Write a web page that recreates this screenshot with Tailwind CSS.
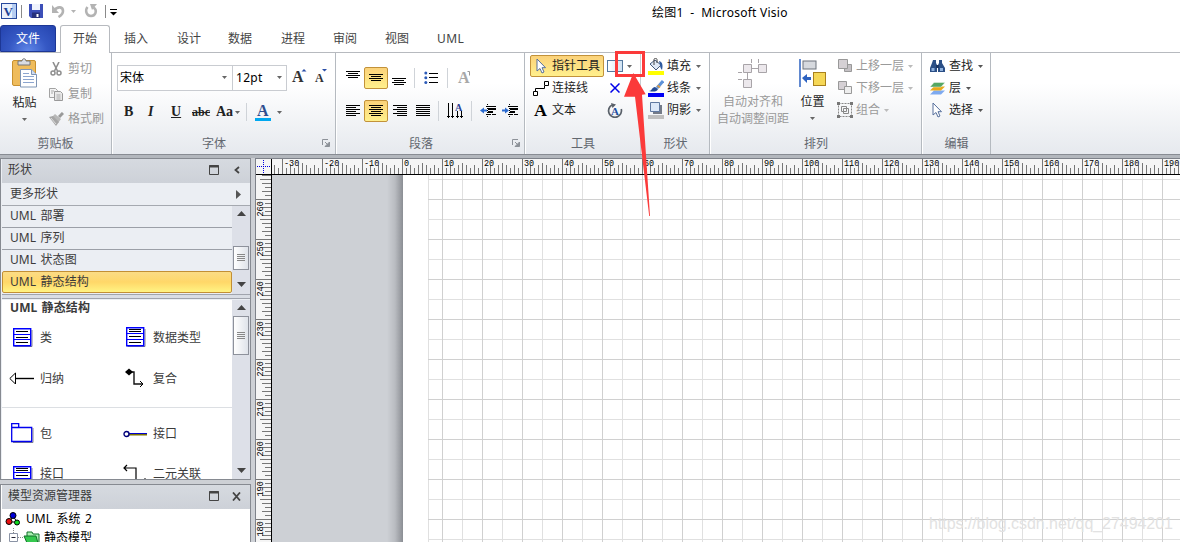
<!DOCTYPE html>
<html lang="zh">
<head>
<meta charset="utf-8">
<title>绘图1 - Microsoft Visio</title>
<script src="https://cdn.jsdelivr.net/npm/@tailwindcss/browser@4"></script>
</head>
<body class="w-[1180px] h-[542px] overflow-hidden relative bg-white text-[12px] leading-[16px] text-[#1e1e1e] font-['Noto_Sans','Noto_Sans_CJK_SC',sans-serif] whitespace-nowrap">
<svg class="hidden">
  <symbol id="caret" viewBox="0 0 5 3"><path d="M0 0h5L2.5 3z" fill="currentColor"/></symbol>
  <symbol id="launch" viewBox="0 0 8 8"><path d="M.5 6V.5H6" fill="none" stroke="#8d9299"/><path d="M3 3l3 3M7.500 3v4.500H3z" stroke="#8d9299" fill="#8d9299"/></symbol>
  <symbol id="cursor" viewBox="0 0 10 16"><path d="M1 1v12l3-2.500 2 4.500 2-1-2-4.300h3.500z" fill="#fff" stroke="#566f9c"/></symbol>
  <symbol id="cls" viewBox="0 0 20 20"><path d="M1.500 18.500h17.500V2" fill="none" stroke="#888"/><path d="M.7 .7h17v17H.7z" fill="#fff" stroke="#0000ff" stroke-width="1.400"/><path d="M0 6.500h18M0 11.500h18" stroke="#0000ff"/><path d="M3 3.500h12M3 9.500h12M3 14.500h12" stroke="#000"/></symbol>
  <symbol id="dtype" viewBox="0 0 20 20"><path d="M1.500 19.500h17.500V2" fill="none" stroke="#888"/><path d="M.7 .7h17v18H.7z" fill="#fff" stroke="#0000ff" stroke-width="1.400"/><path d="M0 6.500h18M0 12.500h18" stroke="#0000ff"/><path d="M3 2.500h12M3 4.500h12M3 9.500h12M3 15.500h12" stroke="#000"/></symbol>
</svg>

<!-- title bar -->
<header class="h-[25px] flex items-start relative">
  <div class="flex items-center h-[22px] pl-[1px]">
    <svg width="16" height="16" viewBox="0 0 16 16"><rect x=".5" y=".5" width="15" height="15" fill="#e8f0fc" stroke="#26489c"/><path d="M11 1h4v14h-4z" fill="#b6cdf2"/><text x="2.500" y="12.500" font-family="Liberation Serif" font-weight="bold" font-size="13" fill="#1d3f94">V</text></svg>
    <div class="ml-[4px] w-px h-[13px] bg-[#8a8a8a]"></div>
    <svg class="ml-[7px]" width="14" height="14" viewBox="0 0 14 14"><path d="M0 0h14v14H2l-2-2z" fill="#3c4fb8"/><path d="M3 0h8v6H3z" fill="#eef2fc"/><path d="M3 8.500h8V14H3z" fill="#26307c"/><path d="M7.500 10h2v3h-2z" fill="#fff"/></svg>
    <svg class="ml-[9px]" width="13" height="13" viewBox="0 0 13 13"><path d="M2 5.500c4-5 9-3.500 9 .5 0 3-2 4.500-4.500 6" fill="none" stroke="#b3b3b3" stroke-width="2.600"/><path d="M0 0v8h7z" fill="#b3b3b3"/></svg>
    <svg class="ml-[6px] text-[#b3b3b3]" width="5" height="3"><use href="#caret"/></svg>
    <svg class="ml-[8px]" width="14" height="14" viewBox="0 0 14 14"><path d="M3.500 3C1 6 2 12 7 12s6.500-6 2.500-8.500" fill="none" stroke="#b3b3b3" stroke-width="2.500"/><path d="M6 0h7L8 6z" fill="#b3b3b3"/></svg>
    <div class="ml-[7px] w-px h-[13px] bg-[#8a8a8a]"></div>
    <svg class="ml-[4px] mt-[2px]" width="7" height="7" viewBox="0 0 7 7"><path d="M0 .5h7" stroke="#000"/><path d="M0 3h7L3.500 6.500z"/></svg>
  </div>
  <div class="absolute left-[652px] top-[5px] text-black tracking-[0.25px]">绘图1&nbsp; - &nbsp;Microsoft Visio</div>
</header>

<!-- tabs -->
<nav class="h-[28px] flex items-end border-b border-[#b7babf] text-[#444]">
  <div class="w-[56px] h-[27px] rounded-t-[3px] border border-[#1d3795] bg-[radial-gradient(ellipse_at_bottom,#5f86e8_0%,#3558c4_50%,#2443ae_100%)] text-white flex items-center justify-center">文件</div>
  <div class="ml-[4px] w-[50px] h-[28px] -mb-px rounded-t-[3px] border border-b-0 border-[#b7babf] bg-white flex items-center justify-center pb-[2px]">开始</div>
  <div class="flex items-center h-[27px] pl-[14px]">
    <span class="w-[53px]">插入</span><span class="w-[51px]">设计</span><span class="w-[53px]">数据</span><span class="w-[52px]">进程</span><span class="w-[52px]">审阅</span><span class="w-[52px]">视图</span><span class="tracking-[0.4px]">UML</span>
  </div>
</nav>

<!-- ribbon -->
<section class="h-[101px] flex bg-linear-to-b from-white from-30% to-[#e6e9ee]">
  <!-- clipboard -->
  <div class="w-[112px] border-r border-[#b5bac0] flex flex-col">
    <div class="h-[80px] flex">
      <div class="w-[49px] flex flex-col items-center pt-[5px]">
        <svg width="26" height="30" viewBox="0 0 26 30"><rect x=".5" y="2.500" width="23" height="25" rx="1.500" fill="#efbc5c" stroke="#c8912f"/><path d="M6 3h4c0-3 4-3 4 0h4v4H6z" fill="#d9dce2" stroke="#777"/><path d="M8.500 11.500h11l5 5v12.500h-16z" fill="#fff" stroke="#7f95b5"/><path d="M19.500 11.500v5h5" fill="#cfdcf0" stroke="#7f95b5"/><path d="M11 15.500h6M11 18.500h11M11 21.500h11M11 24.500h11" stroke="#8ca5cf"/></svg>
        <div class="mt-[7px]">粘贴</div>
        <svg class="mt-[7px] text-[#666]" width="5" height="3"><use href="#caret"/></svg>
      </div>
      <div class="flex flex-col pt-[3px] text-[#989898]">
        <div class="h-[25px] flex items-center gap-[5px]"><svg width="14" height="14" viewBox="0 0 14 14"><path d="M4 0l4.500 9M10 0L5.500 9" stroke="#8f8f8f" stroke-width="1.600"/><circle cx="4" cy="11" r="2" fill="none" stroke="#8f8f8f" stroke-width="1.500"/><circle cx="10" cy="11" r="2" fill="none" stroke="#8f8f8f" stroke-width="1.500"/></svg>剪切</div>
        <div class="h-[25px] flex items-center gap-[5px]"><svg width="14" height="14" viewBox="0 0 14 14"><path d="M.5 1.500h6l2 2v7h-8z" fill="#f4f4f4" stroke="#a3a3a3"/><path d="M5.500 4.500h6l2 2v7h-8z" fill="#e8e8e8" stroke="#999"/><path d="M2 4h3M2 6h2M7.500 8h4M7.500 10h4M7.500 12h4" stroke="#aaa"/></svg>复制</div>
        <div class="h-[25px] flex items-center gap-[4px]"><svg width="15" height="14" viewBox="0 0 15 14"><path d="M14 1l-4 4" stroke="#999" stroke-width="3"/><path d="M6 2l6 5-3 4-6-6z" fill="#b8b8b8"/><path d="M0 5l4-1 6 6-3 4z" fill="#a6a6a6"/><path d="M2 6l5 6" stroke="#ddd"/></svg>格式刷</div>
      </div>
    </div>
    <div class="text-center text-[#62676f] leading-[21px]">剪贴板</div>
  </div>
  <!-- font -->
  <div class="w-[224px] border-l border-l-white border-r border-[#b5bac0] flex flex-col">
    <div class="h-[38px] flex items-end pl-[4px] text-black">
      <div class="w-[116px] h-[26px] border border-[#c9ccd1] bg-white flex items-center justify-between pl-[2px] pr-[5px] pb-[1px]">宋体<svg class="text-[#666]" width="5" height="3"><use href="#caret"/></svg></div>
      <div class="-ml-px w-[55px] h-[26px] border border-[#c9ccd1] bg-white flex items-center justify-between pl-[3px] pr-[4px] pb-[1px] tracking-[0.3px]">12pt<svg class="text-[#666]" width="5" height="3"><use href="#caret"/></svg></div>
      <svg class="ml-[5px] mb-[6px] overflow-visible" width="36" height="18" viewBox="0 0 36 18"><g font-family="Liberation Serif" font-weight="bold" fill="#333"><text x="0" y="15" font-size="16">A</text><text x="23" y="15" font-size="12">A</text></g><path d="M9.500 4.500h5L12 2zM30 2h5l-2.500 2.500z" fill="#2b4fa8"/></svg>
    </div>
    <div class="h-[42px] flex items-center pl-[11px] font-['Liberation_Serif',serif] text-[14px] font-bold text-[#222]">
      <span class="w-[24px]">B</span><span class="w-[23px] italic">I</span><span class="w-[21px] underline">U</span><span class="w-[24px] line-through text-[12px]">abc</span><span class="w-[19px]">Aa</span>
      <svg class="text-[#666]" width="5" height="3"><use href="#caret"/></svg>
      <div class="ml-[6px] w-px h-[18px] bg-[#cfd3d8]"></div>
      <svg class="ml-[8px] mt-[1px] overflow-visible" width="16" height="17" viewBox="0 0 16 17"><text x="2" y="12" font-size="16" font-weight="bold" font-family="Liberation Serif" fill="#2f4f8f">A</text><path d="M0 14h16v3H0z" fill="#00a8f0"/></svg>
      <svg class="ml-[6px] text-[#666]" width="5" height="3"><use href="#caret"/></svg>
    </div>
    <div class="flex text-[#62676f] leading-[21px]"><span class="w-[202px] text-center">字体</span><svg class="ml-[7px] mt-[6px]" width="8" height="8"><use href="#launch"/></svg></div>
  </div>
  <!-- paragraph -->
  <div class="w-[189px] border-l border-l-white border-r border-[#b5bac0] flex flex-col">
    <div class="mt-[8px] h-[33px] flex items-center pl-[9px]">
      <svg width="14" height="22" stroke="#000"><path d="M0 4.500h14M2 6.500h10M0 8.500h14M2 10.500h10"/></svg>
      <div class="ml-[4px] w-[24px] h-[22px] rounded-[2px] border border-[#c2923a] bg-linear-to-b from-[#fbd27a] to-[#fff08c] flex items-center justify-center"><svg width="14" height="8" stroke="#000"><path d="M0 .5h14M2 2.500h10M0 4.500h14M2 6.500h10"/></svg></div>
      <svg class="ml-[4px]" width="14" height="22" stroke="#000"><path d="M0 11.500h14M2 13.500h10M0 15.500h14M2 17.500h10"/></svg>
      <div class="ml-[8px] w-px h-[20px] bg-[#cfd3d8]"></div>
      <svg class="ml-[9px]" width="14" height="14" viewBox="0 0 14 14"><path d="M5 2.500h9M5 6.500h9M5 11.500h9" stroke="#000"/><g fill="#2c5bb8"><circle cx="1.800" cy="2" r="1.500"/><circle cx="1.800" cy="6.700" r="1.500"/><circle cx="1.800" cy="11.500" r="1.500"/></g></svg>
      <div class="ml-[9px] w-px h-[20px] bg-[#cfd3d8]"></div>
      <svg class="ml-[10px] overflow-visible" width="14" height="16" viewBox="0 0 14 16"><text x="0" y="13" font-size="16" font-weight="bold" font-family="Liberation Serif" fill="#a8a8a8">A</text><path d="M9.500 1.500h2v4" fill="none" stroke="#999"/></svg>
    </div>
    <div class="h-[33px] mb-[6px] flex items-center pl-[9px]">
      <svg width="14" height="12" stroke="#000"><path d="M0 .5h14M0 2.500h10M0 4.500h14M0 6.500h10M0 8.500h14M0 10.500h10"/></svg>
      <div class="ml-[4px] w-[24px] h-[22px] rounded-[2px] border border-[#c2923a] bg-linear-to-b from-[#fbd27a] to-[#fff08c] flex items-center justify-center"><svg width="14" height="12" stroke="#000"><path d="M0 .5h14M2 2.500h10M0 4.500h14M2 6.500h10M0 8.500h14M2 10.500h10"/></svg></div>
      <svg class="ml-[5px]" width="14" height="12" stroke="#000"><path d="M0 .5h14M4 2.500h10M0 4.500h14M4 6.500h10M0 8.500h14M4 10.500h10"/></svg>
      <svg class="ml-[9px]" width="14" height="12" stroke="#000"><path d="M0 .5h14M0 2.500h14M0 4.500h14M0 6.500h14M0 8.500h14M0 10.500h14"/></svg>
      <div class="ml-[8px] w-px h-[20px] bg-[#cfd3d8]"></div>
      <svg class="ml-[8px] overflow-visible" width="16" height="16" viewBox="0 0 16 16"><path d="M1.500 0v15M5.500 0v15M10.500 8v7M14.500 8v7M0 13.500h3M4 13.500h3M9 13.500h3M13 13.500h3" stroke="#000"/><text x="8" y="7.500" font-size="10" font-weight="bold" font-family="Liberation Serif" fill="#2b3f94">A</text></svg>
      <div class="ml-[8px] w-px h-[20px] bg-[#cfd3d8]"></div>
      <svg class="ml-[8px]" width="16" height="14" viewBox="0 0 16 14"><path d="M6 2.500h10M6 10.500h5" stroke="#000"/><path d="M8 5h8M8 8h5" stroke="#000" stroke-width="2"/><path d="M12 10.500h4" stroke="#000"/><path d="M7.500 0v14" stroke="#000" stroke-dasharray="1 1"/><path d="M0 6.500l4-3v2h3v2H4v2z" fill="#2c6bd0"/></svg>
      <svg class="ml-[6px]" width="16" height="14" viewBox="0 0 16 14"><path d="M6 2.500h10M6 10.500h5" stroke="#000"/><path d="M8 5h8M8 8h5" stroke="#000" stroke-width="2"/><path d="M12 10.500h4" stroke="#000"/><path d="M7.500 0v14" stroke="#000" stroke-dasharray="1 1"/><path d="M7 6.500l-4-3v2H0v2h3v2z" fill="#2c6bd0"/></svg>
    </div>
    <div class="flex text-[#62676f] leading-[21px]"><span class="w-[168px] text-center">段落</span><svg class="ml-[7px] mt-[6px]" width="8" height="8"><use href="#launch"/></svg></div>
  </div>
  <!-- tools -->
  <div class="w-[116px] border-l border-l-white border-r border-[#c9cdd2] flex flex-col">
    <div class="h-[80px] flex pl-[4px] pt-[2px]">
      <div class="flex flex-col">
        <div class="w-[74px] h-[22px] rounded-[2px] border border-[#c2923a] bg-linear-to-b from-[#fbd27a] to-[#fff08c] flex items-center pl-[5px]"><svg class="mr-[6px]" width="10" height="16"><use href="#cursor"/></svg>指针工具</div>
        <div class="h-[22px] flex items-center pl-[3px]"><svg class="mr-[3px]" width="16" height="15" viewBox="0 0 16 15"><path d="M2.500 10V7.500h9V5" fill="none" stroke="#000"/><path d="M.5 10.500h4v4h-4zM11.500 .5h4v4h-4z" fill="#fff" stroke="#000"/></svg>连接线</div>
        <div class="h-[22px] flex items-center pl-[4px]"><svg class="mr-[4px] overflow-visible" width="14" height="13" viewBox="0 0 14 13"><text x="0" y="12" font-size="17" font-weight="bold" font-family="Liberation Serif" textLength="13" lengthAdjust="spacingAndGlyphs">A</text></svg>文本</div>
      </div>
      <div class="flex flex-col pl-[3px]">
        <div class="h-[22px] flex items-center"><svg width="16" height="12"><defs><linearGradient id="rg"><stop stop-color="#fff"/><stop offset="1" stop-color="#cfe2f3"/></linearGradient></defs><rect x=".5" y=".5" width="15" height="11" fill="url(#rg)" stroke="#54789e"/></svg><svg class="ml-[4px] text-[#666]" width="5" height="3"><use href="#caret"/></svg></div>
        <div class="h-[22px] flex items-center pl-[3px]"><svg width="10" height="10"><path d="M.5 .5l9 9M9.500 .5l-9 9" stroke="#0000e8" stroke-width="1.500"/></svg></div>
        <div class="h-[24px] flex items-center"><svg width="16" height="16" viewBox="0 0 16 16"><path d="M5 2A6.500 6.500 0 1 0 14.300 6" fill="none" stroke="#596069" stroke-width="1.700"/><path d="M4 0l5 1.500L5.500 5z" fill="#596069"/><text x="4" y="12" font-size="11" font-weight="bold" font-family="Liberation Serif" fill="#1f4fa0">A</text></svg></div>
      </div>
    </div>
    <div class="text-center text-[#62676f] leading-[21px]">工具</div>
  </div>
  <!-- shape -->
  <div class="w-[69px] border-l border-l-white border-r border-[#b5bac0] flex flex-col">
    <div class="h-[80px] flex flex-col pl-[6px] pt-[2px]">
      <div class="h-[22px] flex items-center"><svg width="16" height="17" viewBox="0 0 16 17"><path d="M2 6l5-4 6 5-5 5z" fill="#dfe9f6" stroke="#445b7e"/><path d="M6 7V1.500c0-1.500 3-1.500 3 0V5" fill="none" stroke="#444"/><path d="M11 3c4 1 4 5 3 9-1-1-2-3-2-5z" fill="#2e5aa0"/><path d="M0 13h16v4H0z" fill="#ff0"/></svg><span class="ml-[3px] w-[29px]">填充</span><svg class="text-[#666]" width="5" height="3"><use href="#caret"/></svg></div>
      <div class="h-[22px] flex items-center"><svg width="16" height="17" viewBox="0 0 16 17"><path d="M15 1L9 8" stroke="#5d92d8" stroke-width="3"/><path d="M9.500 5.500l2.500 2" stroke="#d89a48" stroke-width="2"/><path d="M1 11c3 0 3-4 6-4l3 2c-1 3-5 3-9 2z" fill="#234a94"/><path d="M0 13h16v4H0z" fill="#0000f4"/></svg><span class="ml-[3px] w-[29px]">线条</span><svg class="text-[#666]" width="5" height="3"><use href="#caret"/></svg></div>
      <div class="h-[22px] flex items-center"><svg width="16" height="17" viewBox="0 0 16 17"><path d="M5 3h9v9H5z" fill="#747b88"/><path d="M2.500 .5h9v9h-9z" fill="#dce8f8" stroke="#5f78a0"/><path d="M0 13h16v4H0z" fill="#bfbfbf"/></svg><span class="ml-[3px] w-[29px]">阴影</span><svg class="text-[#666]" width="5" height="3"><use href="#caret"/></svg></div>
    </div>
    <div class="text-center text-[#62676f] leading-[21px]">形状</div>
  </div>
  <!-- arrange -->
  <div class="w-[212px] border-l border-l-white border-r border-[#b5bac0] flex flex-col">
    <div class="h-[80px] flex pt-[2px]">
      <div class="w-[84px] flex flex-col items-center text-[#9a9a9a] pt-[4px]">
        <svg width="30" height="30" viewBox="0 0 30 30" fill="#ece8ec" stroke="#a8a4a8"><path d="M13.500 0v4M20.500 0v4M0 13.500h4M14 9.500h7M9.500 14v7M0 20.500h4" fill="none"/><path d="M5.500 5.500h8v8h-8zM20.500 5.500h8v8h-8zM5.500 20.500h8v8h-8z"/></svg>
        <div class="mt-[4px] leading-[17px] text-center">自动对齐和<br>自动调整间距</div>
      </div>
      <div class="w-[35px] flex flex-col items-center pt-[4px]">
        <svg width="28" height="29" viewBox="0 0 28 29"><path d="M1 0v28" stroke="#2d62c0" stroke-width="1.500"/><rect x="4" y="2" width="13" height="8" fill="#d6d9de" stroke="#6d737c"/><rect x="14.500" y="13.500" width="12" height="13" fill="#f5d756" stroke="#a9811d"/><path d="M3 19l5-4v3h4v3H8v3z" fill="#2d62c0"/></svg>
        <div class="mt-[6px]">位置</div>
        <svg class="mt-[7px] text-[#666]" width="5" height="3"><use href="#caret"/></svg>
      </div>
      <div class="flex flex-col pl-[7px] text-[#9a9a9a]">
        <div class="h-[22px] flex items-center"><svg width="16" height="14" viewBox="0 0 16 14" fill="#d5d0d4" stroke="#999"><path d="M7.500 5.500h7v7h-7z" fill="#c4c0c4"/><path d="M1.500 .5h9v9h-9z"/></svg><span class="ml-[3px] w-[52px]">上移一层</span><svg class="text-[#bbb]" width="5" height="3"><use href="#caret"/></svg></div>
        <div class="h-[22px] flex items-center"><svg width="16" height="14" viewBox="0 0 16 14" fill="#d5d0d4" stroke="#999"><path d="M1.500 .5h8v8h-8z"/><path d="M7.500 5.500h7v7h-7z" fill="#eee"/></svg><span class="ml-[3px] w-[52px]">下移一层</span><svg class="text-[#bbb]" width="5" height="3"><use href="#caret"/></svg></div>
        <div class="h-[22px] flex items-center"><svg width="16" height="16" viewBox="0 0 16 16" fill="none" stroke="#888"><path d="M1.500 1.500h13v13h-13z" stroke-dasharray="2 1"/><path d="M4.500 4.500h5v5h-5zM6.500 6.500h5v5h-5z"/><path d="M0 0h3v3H0zM13 0h3v3h-3zM0 13h3v3H0zM13 13h3v3h-3z" fill="#777" stroke="none"/></svg><span class="ml-[3px] w-[28px]">组合</span><svg class="text-[#bbb]" width="5" height="3"><use href="#caret"/></svg></div>
      </div>
    </div>
    <div class="text-center text-[#62676f] leading-[21px]">排列</div>
  </div>
  <!-- edit -->
  <div class="w-[69px] border-l border-l-white border-r border-[#b5bac0] flex flex-col">
    <div class="h-[80px] flex flex-col pl-[7px] pt-[2px]">
      <div class="h-[22px] flex items-center"><svg width="15" height="13" viewBox="0 0 15 13"><path d="M3 0h3v3l1 2v7H0V8l2-5zM9 0h3v3l3 5v4H8V5l1-2z" fill="#2b4f86"/><path d="M1.500 8h3v3h-3zM10 8h3v3h-3z" fill="#8fb1dd"/><path d="M6 5h3v3H6z" fill="#1d3765"/></svg><span class="ml-[4px] w-[29px]">查找</span><svg class="text-[#555]" width="5" height="3"><use href="#caret"/></svg></div>
      <div class="h-[22px] flex items-center"><svg width="15" height="13" viewBox="0 0 15 13"><path d="M4 8.500h11l-4 4H0z" fill="#7eaaf0"/><path d="M4 4.500h11l-4 4H0z" fill="#e8a91c"/><path d="M4 .5h11l-4 4.500H0z" fill="#56a763" stroke="#fff" stroke-width=".4"/></svg><span class="ml-[4px] w-[17px]">层</span><svg class="text-[#555]" width="5" height="3"><use href="#caret"/></svg></div>
      <div class="h-[22px] flex items-center"><svg class="ml-[2px] mr-[3px]" width="10" height="16"><use href="#cursor"/></svg><span class="ml-[4px] w-[29px]">选择</span><svg class="text-[#555]" width="5" height="3"><use href="#caret"/></svg></div>
    </div>
    <div class="text-center text-[#62676f] leading-[21px]">编辑</div>
  </div>
</section>
<div class="h-[4px] border-t border-[#888c93] bg-[#b3b7bd]"></div>

<!-- work area -->
<main class="h-[384px] flex bg-[#cdd0d5]">
  <aside class="w-[251px] flex flex-col text-[#3b3b3b]">
    <section class="h-[322px] border border-[#868a91] flex flex-col bg-[#ebeef3] pl-px">
      <div class="h-[24px] bg-linear-to-b from-[#d6dae0] to-[#cdd1d8] flex items-center pl-[6px] pb-[2px]"><span class="w-[201px]">形状</span>
        <svg width="11" height="10"><path d="M.5 .5h9v9h-9z" fill="none" stroke="#444"/><path d="M0 1.500h10" stroke="#444" stroke-width="2"/></svg>
        <svg class="ml-[14px]" width="6" height="8"><path d="M5 1L1.500 4 5 7" fill="none" stroke="#444" stroke-width="1.800"/></svg></div>
      <div class="h-[23px] border-b border-[#a5a9b0] flex items-center pl-[8px]"><span class="w-[226px]">更多形状</span><svg width="5" height="9"><path d="M0 0v9l5-4.500z" fill="#555"/></svg></div>
      <div class="h-[88px] flex">
        <div class="w-[230px] flex flex-col [word-spacing:1px] tracking-[0.1px]">
          <div class="h-[22px] border-b border-[#9b9fa7] flex items-center pl-[8px] pb-[2px]">UML 部署</div>
          <div class="h-[22px] border-b border-[#9b9fa7] flex items-center pl-[8px] pb-[2px]">UML 序列</div>
          <div class="h-[21px] flex items-center pl-[8px] pb-[2px]">UML 状态图</div>
          <div class="h-[22px] rounded-[2px] border border-[#c28f35] bg-linear-to-b from-[#fbdc85] via-[#ffd768] to-[#fff383] flex items-center pl-[7px]">UML 静态结构</div>
        </div>
        <div class="flex-1 bg-[#dde0e8] flex flex-col items-center text-[#444]">
          <svg class="mt-[5px]" width="9" height="5"><path d="M0 5h9L4.500 0z" fill="currentColor"/></svg>
          <div class="mt-[30px] w-[16px] h-[24px] border border-[#8d919b] bg-linear-to-r from-white to-[#dfe3ea] flex items-center justify-center"><svg width="8" height="8" stroke="#888"><path d="M0 .5h8M0 2.500h8M0 4.500h8M0 6.500h8"/></svg></div>
          <svg class="mt-[12px]" width="9" height="5"><path d="M0 0h9L4.500 5z" fill="currentColor"/></svg>
        </div>
      </div>
      <div class="h-[5px] border-y border-[#a0a4ad] bg-[#d9dde4] mb-px"></div>
      <div class="flex-1 min-h-0 flex overflow-hidden">
        <div class="w-[230px] bg-white overflow-hidden">
          <div class="pl-[8px] h-[16px] font-bold [word-spacing:1px] tracking-[0.1px]">UML 静态结构</div>
          <div class="grid grid-cols-[38px_76px_37px_79px] grid-rows-[41px_41px] mt-px items-center">
            <svg class="ml-[11px]" width="20" height="20"><use href="#cls"/></svg><span>类</span>
            <svg class="ml-[10px] -mt-[2px]" width="20" height="20"><use href="#dtype"/></svg><span>数据类型</span>
            <svg class="ml-[7px] -mt-[2px]" width="26" height="12"><path d="M6 6.500h19" stroke="#000" stroke-width="1.400"/><path d="M6.500 1v11L.8 6.500z" fill="#fff" stroke="#000"/></svg><span>归纳</span>
            <svg class="ml-[9px] -mt-[2px]" width="20" height="20"><path d="M4 4h5v12h9" fill="none" stroke="#111" stroke-width="1.400"/><path d="M0 4l4-3.500L8 4 4 7.500z"/><path d="M15 13l3 3-3 3" fill="none" stroke="#000"/></svg><span>复合</span>
          </div>
          <div class="h-px bg-[#dcdfe3] mt-[8px]"></div>
          <div class="grid grid-cols-[38px_76px_37px_79px] grid-rows-[51px_30px] items-center">
            <svg class="ml-[9px] -mt-[2px]" width="23" height="20"><path d="M2 19.500h20V5" fill="none" stroke="#888"/><path d="M.7 4.500V.7h7v3.800M.7 4.500h20v14H.7z" fill="#fff" stroke="#0000f0" stroke-width="1.300"/></svg><span>包</span>
            <svg class="ml-[7px]" width="25" height="8"><path d="M6 4.500h18" stroke="#7a7000" stroke-width="2"/><path d="M6 3.500h18" stroke="#0000d0"/><circle cx="3.500" cy="4" r="2.500" fill="#fff" stroke="#00007a" stroke-width="1.400"/></svg><span>接口</span>
            <svg class="ml-[11px] mt-[4px]" width="20" height="20"><use href="#dtype"/></svg><span>接口</span>
            <svg class="ml-[7px]" width="24" height="20"><path d="M1 4h12v11M21 15h2M4 1L1 4l3 3" fill="none" stroke="#000" stroke-width="1.200"/></svg><span>二元关联</span>
          </div>
        </div>
        <div class="flex-1 bg-[#dde0e8] flex flex-col items-center text-[#444]">
          <svg class="mt-[5px]" width="9" height="5"><path d="M0 5h9L4.500 0z" fill="currentColor"/></svg>
          <div class="mt-[6px] w-[16px] h-[39px] border border-[#8d919b] bg-linear-to-r from-white to-[#dfe3ea] flex items-center justify-center"><svg width="8" height="8" stroke="#888"><path d="M0 .5h8M0 2.500h8M0 4.500h8M0 6.500h8"/></svg></div>
          <svg class="mt-auto mb-[6px]" width="9" height="5"><path d="M0 0h9L4.500 5z" fill="currentColor"/></svg>
        </div>
      </div>
    </section>
    <section class="mt-[4px] h-[60px] overflow-hidden border border-b-0 border-[#868a91] bg-white pl-px">
      <div class="h-[24px] bg-linear-to-b from-[#d6dae0] to-[#cdd1d8] flex items-center pl-[6px] pb-[2px]"><span class="w-[201px]">模型资源管理器</span>
        <svg width="11" height="10"><path d="M.5 .5h9v9h-9z" fill="none" stroke="#444"/><path d="M0 1.500h10" stroke="#444" stroke-width="2"/></svg>
        <svg class="ml-[12px]" width="10" height="9"><path d="M1 .5l7 8M8 .5l-7 8" stroke="#444" stroke-width="1.800"/></svg></div>
      <div class="h-[19px] flex items-center pl-[3px] text-black"><svg width="16" height="14" viewBox="0 0 16 14" stroke="#000"><path d="M8 4L4 10h8z" fill="none"/><circle cx="8" cy="3.500" r="3" fill="#0000d8"/><circle cx="4" cy="9.500" r="3" fill="#e81010"/><circle cx="12" cy="10.500" r="2.500" fill="#10d820"/></svg><span class="ml-[5px] [word-spacing:1px] tracking-[0.1px]">UML 系统 2</span></div>
      <div class="h-[19px] flex items-center pl-[7px] text-black"><svg width="32" height="19" viewBox="0 0 32 19"><path d="M4.500 0v5M9 9.500h6" stroke="#888" stroke-dasharray="1 1"/><path d="M.5 5.500h8v8h-8z" fill="#fff" stroke="#8a93a5"/><path d="M2.500 9.500h4" stroke="#223"/><path d="M18 4h5l1 2h6v9H18z" fill="#a8f0b0" stroke="#12702a"/><path d="M15 8h12l2 7H18z" fill="#35c84e" stroke="#12702a"/></svg><span class="ml-[3px]">静态模型</span></div>
    </section>
  </aside>
  <div class="w-[4px]"></div>
  <div class="flex-1 flex flex-col border-l border-t border-[#7e828a]">
    <div class="h-[16px] flex border-b border-black bg-[#f5f5f5]">
      <svg class="border-r border-black" width="16" height="15"><path d="M1 7.500h14M7.500 1v14" stroke="#0000e0" stroke-dasharray="1 1"/></svg>
      <svg id="hr" width="908" height="15" class="font-['Liberation_Mono',monospace] text-[8.500px]"></svg>
    </div>
    <div class="flex-1 flex min-h-0">
      <svg id="vr" width="16" height="367" class="shrink-0 border-r border-black bg-[#f5f5f5] font-['Liberation_Mono',monospace] text-[8.500px]"></svg>
      <div class="w-[131px] bg-[linear-gradient(to_right,#cdd0d5_0,#cdd0d5_115px,#b9bcc1_123px,#8b8e94_131px)]"></div>
      <svg id="grid" class="bg-white" width="777" height="367"></svg>
    </div>
  </div>
</main>

<!-- annotation and watermark -->
<svg class="absolute left-0 top-0" width="1180" height="542"><rect x="616.500" y="52.500" width="27" height="23" fill="none" stroke="#fb3a3a" stroke-width="3"/><path d="M633.300 73l12.400 21.300-3.700.5 8 121.200h-.8L635 96.700H624z" fill="#fb3a3a"/></svg>
<div class="absolute left-[929px] top-[514px] text-[16px] leading-[20px] tracking-[-0.05px] text-[#e2e2e2] font-['Liberation_Sans',sans-serif]">https://blog.csdn.net/qq_27494201</div>

<script>
// Ruler ticks are 4px apart; a major tick with a label comes every 10 units.
const tick = (n, major) => n % 10 === 0 ? major : n % 5 === 0 ? 11 : n % 2 === 0 ? 9 : 6;
let h = '', labels = '';
for (let n = -32; n <= 195; n++) {
  const x = 402.5 + n * 4 - 272;
  h += `M${x} 15v${-tick(Math.abs(n), 15)}`;
  if (n % 10 === 0) labels += `<text x="${x + 1.5}" y="7">${n}</text>`;
}
document.getElementById('hr').innerHTML = `<path d="${h}" stroke="#777"/>${labels}`;
let v = '', vl = '';
for (let n = 175; n <= 266; n++) {
  const y = 199.5 + (260 - n) * 4 - 175;
  v += `M15 ${y}h${-tick(n, 15)}`;
  if (n % 10 === 0) vl += `<text transform="translate(7 ${y + 17}) rotate(-90)">${n}</text>`;
}
document.getElementById('vr').innerHTML = `<path d="${v}" stroke="#777"/>${vl}`;
let strong = '', weak = '';
for (let i = 2; i < 39; i++) {
  const p = `M${i * 20 - .5} 0V367`;
  i % 2 ? weak += p : strong += p;
}
for (let i = 0; i < 19; i++) {
  const p = `M25 ${i * 20 + 4.5}H777`;
  i % 2 ? strong += p : weak += p;
}
document.getElementById('grid').innerHTML = `<path d="${weak}M25.500 0V367" stroke="#e0e0e0"/><path d="${strong}" stroke="#d0d0d0"/>`;
</script>
</body>
</html>
